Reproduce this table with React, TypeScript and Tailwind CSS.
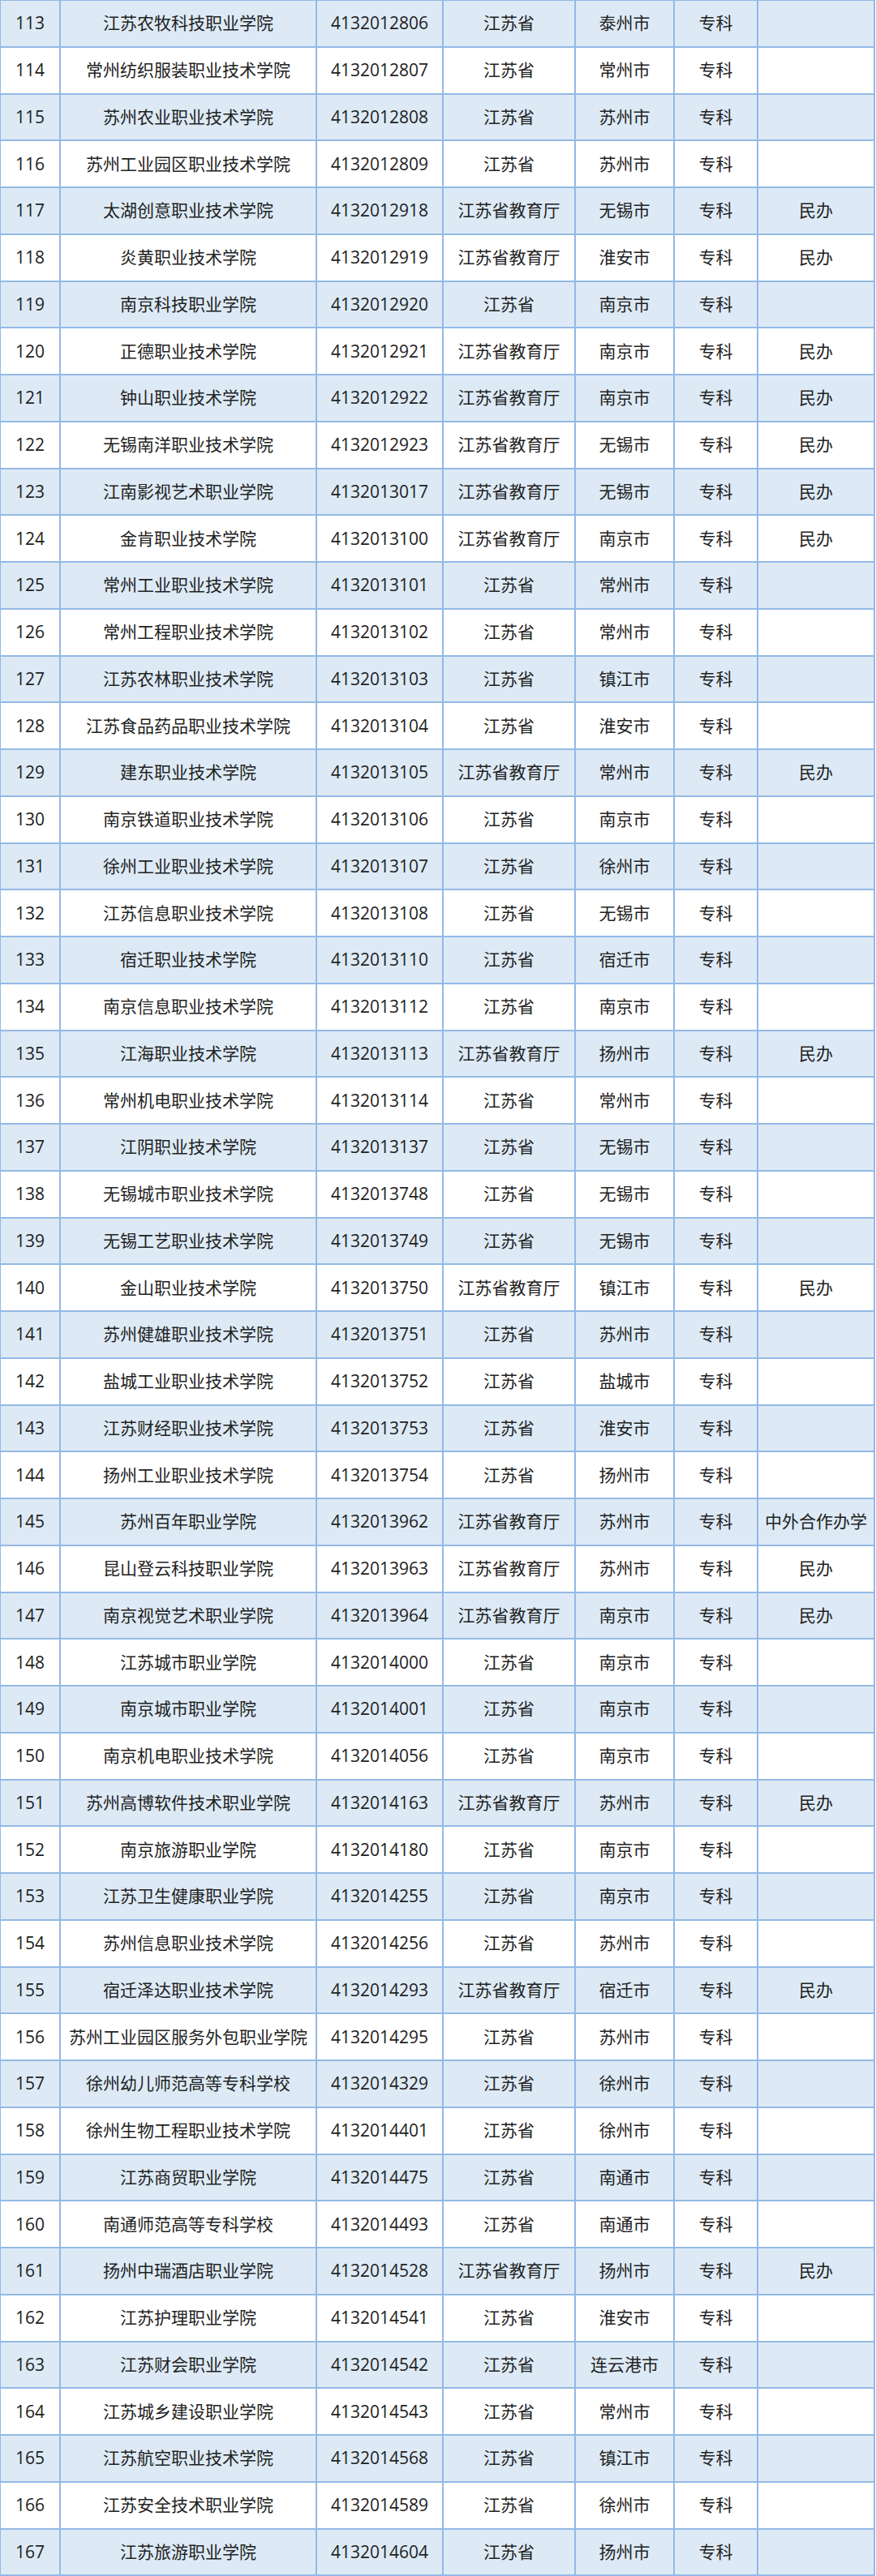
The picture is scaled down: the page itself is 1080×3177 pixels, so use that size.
import React from "react";

type Row = [number, string, string, string, string, string, string];

const rows: Row[] = [
  [113, "江苏农牧科技职业学院", "4132012806", "江苏省", "泰州市", "专科", ""],
  [114, "常州纺织服装职业技术学院", "4132012807", "江苏省", "常州市", "专科", ""],
  [115, "苏州农业职业技术学院", "4132012808", "江苏省", "苏州市", "专科", ""],
  [116, "苏州工业园区职业技术学院", "4132012809", "江苏省", "苏州市", "专科", ""],
  [117, "太湖创意职业技术学院", "4132012918", "江苏省教育厅", "无锡市", "专科", "民办"],
  [118, "炎黄职业技术学院", "4132012919", "江苏省教育厅", "淮安市", "专科", "民办"],
  [119, "南京科技职业学院", "4132012920", "江苏省", "南京市", "专科", ""],
  [120, "正德职业技术学院", "4132012921", "江苏省教育厅", "南京市", "专科", "民办"],
  [121, "钟山职业技术学院", "4132012922", "江苏省教育厅", "南京市", "专科", "民办"],
  [122, "无锡南洋职业技术学院", "4132012923", "江苏省教育厅", "无锡市", "专科", "民办"],
  [123, "江南影视艺术职业学院", "4132013017", "江苏省教育厅", "无锡市", "专科", "民办"],
  [124, "金肯职业技术学院", "4132013100", "江苏省教育厅", "南京市", "专科", "民办"],
  [125, "常州工业职业技术学院", "4132013101", "江苏省", "常州市", "专科", ""],
  [126, "常州工程职业技术学院", "4132013102", "江苏省", "常州市", "专科", ""],
  [127, "江苏农林职业技术学院", "4132013103", "江苏省", "镇江市", "专科", ""],
  [128, "江苏食品药品职业技术学院", "4132013104", "江苏省", "淮安市", "专科", ""],
  [129, "建东职业技术学院", "4132013105", "江苏省教育厅", "常州市", "专科", "民办"],
  [130, "南京铁道职业技术学院", "4132013106", "江苏省", "南京市", "专科", ""],
  [131, "徐州工业职业技术学院", "4132013107", "江苏省", "徐州市", "专科", ""],
  [132, "江苏信息职业技术学院", "4132013108", "江苏省", "无锡市", "专科", ""],
  [133, "宿迁职业技术学院", "4132013110", "江苏省", "宿迁市", "专科", ""],
  [134, "南京信息职业技术学院", "4132013112", "江苏省", "南京市", "专科", ""],
  [135, "江海职业技术学院", "4132013113", "江苏省教育厅", "扬州市", "专科", "民办"],
  [136, "常州机电职业技术学院", "4132013114", "江苏省", "常州市", "专科", ""],
  [137, "江阴职业技术学院", "4132013137", "江苏省", "无锡市", "专科", ""],
  [138, "无锡城市职业技术学院", "4132013748", "江苏省", "无锡市", "专科", ""],
  [139, "无锡工艺职业技术学院", "4132013749", "江苏省", "无锡市", "专科", ""],
  [140, "金山职业技术学院", "4132013750", "江苏省教育厅", "镇江市", "专科", "民办"],
  [141, "苏州健雄职业技术学院", "4132013751", "江苏省", "苏州市", "专科", ""],
  [142, "盐城工业职业技术学院", "4132013752", "江苏省", "盐城市", "专科", ""],
  [143, "江苏财经职业技术学院", "4132013753", "江苏省", "淮安市", "专科", ""],
  [144, "扬州工业职业技术学院", "4132013754", "江苏省", "扬州市", "专科", ""],
  [145, "苏州百年职业学院", "4132013962", "江苏省教育厅", "苏州市", "专科", "中外合作办学"],
  [146, "昆山登云科技职业学院", "4132013963", "江苏省教育厅", "苏州市", "专科", "民办"],
  [147, "南京视觉艺术职业学院", "4132013964", "江苏省教育厅", "南京市", "专科", "民办"],
  [148, "江苏城市职业学院", "4132014000", "江苏省", "南京市", "专科", ""],
  [149, "南京城市职业学院", "4132014001", "江苏省", "南京市", "专科", ""],
  [150, "南京机电职业技术学院", "4132014056", "江苏省", "南京市", "专科", ""],
  [151, "苏州高博软件技术职业学院", "4132014163", "江苏省教育厅", "苏州市", "专科", "民办"],
  [152, "南京旅游职业学院", "4132014180", "江苏省", "南京市", "专科", ""],
  [153, "江苏卫生健康职业学院", "4132014255", "江苏省", "南京市", "专科", ""],
  [154, "苏州信息职业技术学院", "4132014256", "江苏省", "苏州市", "专科", ""],
  [155, "宿迁泽达职业技术学院", "4132014293", "江苏省教育厅", "宿迁市", "专科", "民办"],
  [156, "苏州工业园区服务外包职业学院", "4132014295", "江苏省", "苏州市", "专科", ""],
  [157, "徐州幼儿师范高等专科学校", "4132014329", "江苏省", "徐州市", "专科", ""],
  [158, "徐州生物工程职业技术学院", "4132014401", "江苏省", "徐州市", "专科", ""],
  [159, "江苏商贸职业学院", "4132014475", "江苏省", "南通市", "专科", ""],
  [160, "南通师范高等专科学校", "4132014493", "江苏省", "南通市", "专科", ""],
  [161, "扬州中瑞酒店职业学院", "4132014528", "江苏省教育厅", "扬州市", "专科", "民办"],
  [162, "江苏护理职业学院", "4132014541", "江苏省", "淮安市", "专科", ""],
  [163, "江苏财会职业学院", "4132014542", "江苏省", "连云港市", "专科", ""],
  [164, "江苏城乡建设职业学院", "4132014543", "江苏省", "常州市", "专科", ""],
  [165, "江苏航空职业技术学院", "4132014568", "江苏省", "镇江市", "专科", ""],
  [166, "江苏安全技术职业学院", "4132014589", "江苏省", "徐州市", "专科", ""],
  [167, "江苏旅游职业学院", "4132014604", "江苏省", "扬州市", "专科", ""],
];

export default function App() {
  return (
    <div className="w-[1080px] bg-white">
      <div
        className="w-[1079px] bg-[#93b9e5] pt-[1px] pl-[1px] pr-[2px] pb-[2px] flex flex-col gap-y-[2px] text-[21px] text-[#222222]"
        style={{ fontFamily: '"Open Sans", "Noto Sans CJK SC", sans-serif' }}
      >
        {rows.map((r, i) => {
          const bg = i % 2 === 0 ? "bg-[#ddeaf6]" : "bg-white";
          return (
            <div
              key={r[0]}
              className="grid grid-cols-[72px_314px_154px_161px_120px_101px_142px] gap-x-[2px] h-[55.75px]"
            >
              {r.map((c, j) => (
                <div
                  key={j}
                  className={`${bg} flex items-center justify-center whitespace-nowrap overflow-hidden leading-none`}
                >
                  {String(c)}
                </div>
              ))}
            </div>
          );
        })}
      </div>
    </div>
  );
}
